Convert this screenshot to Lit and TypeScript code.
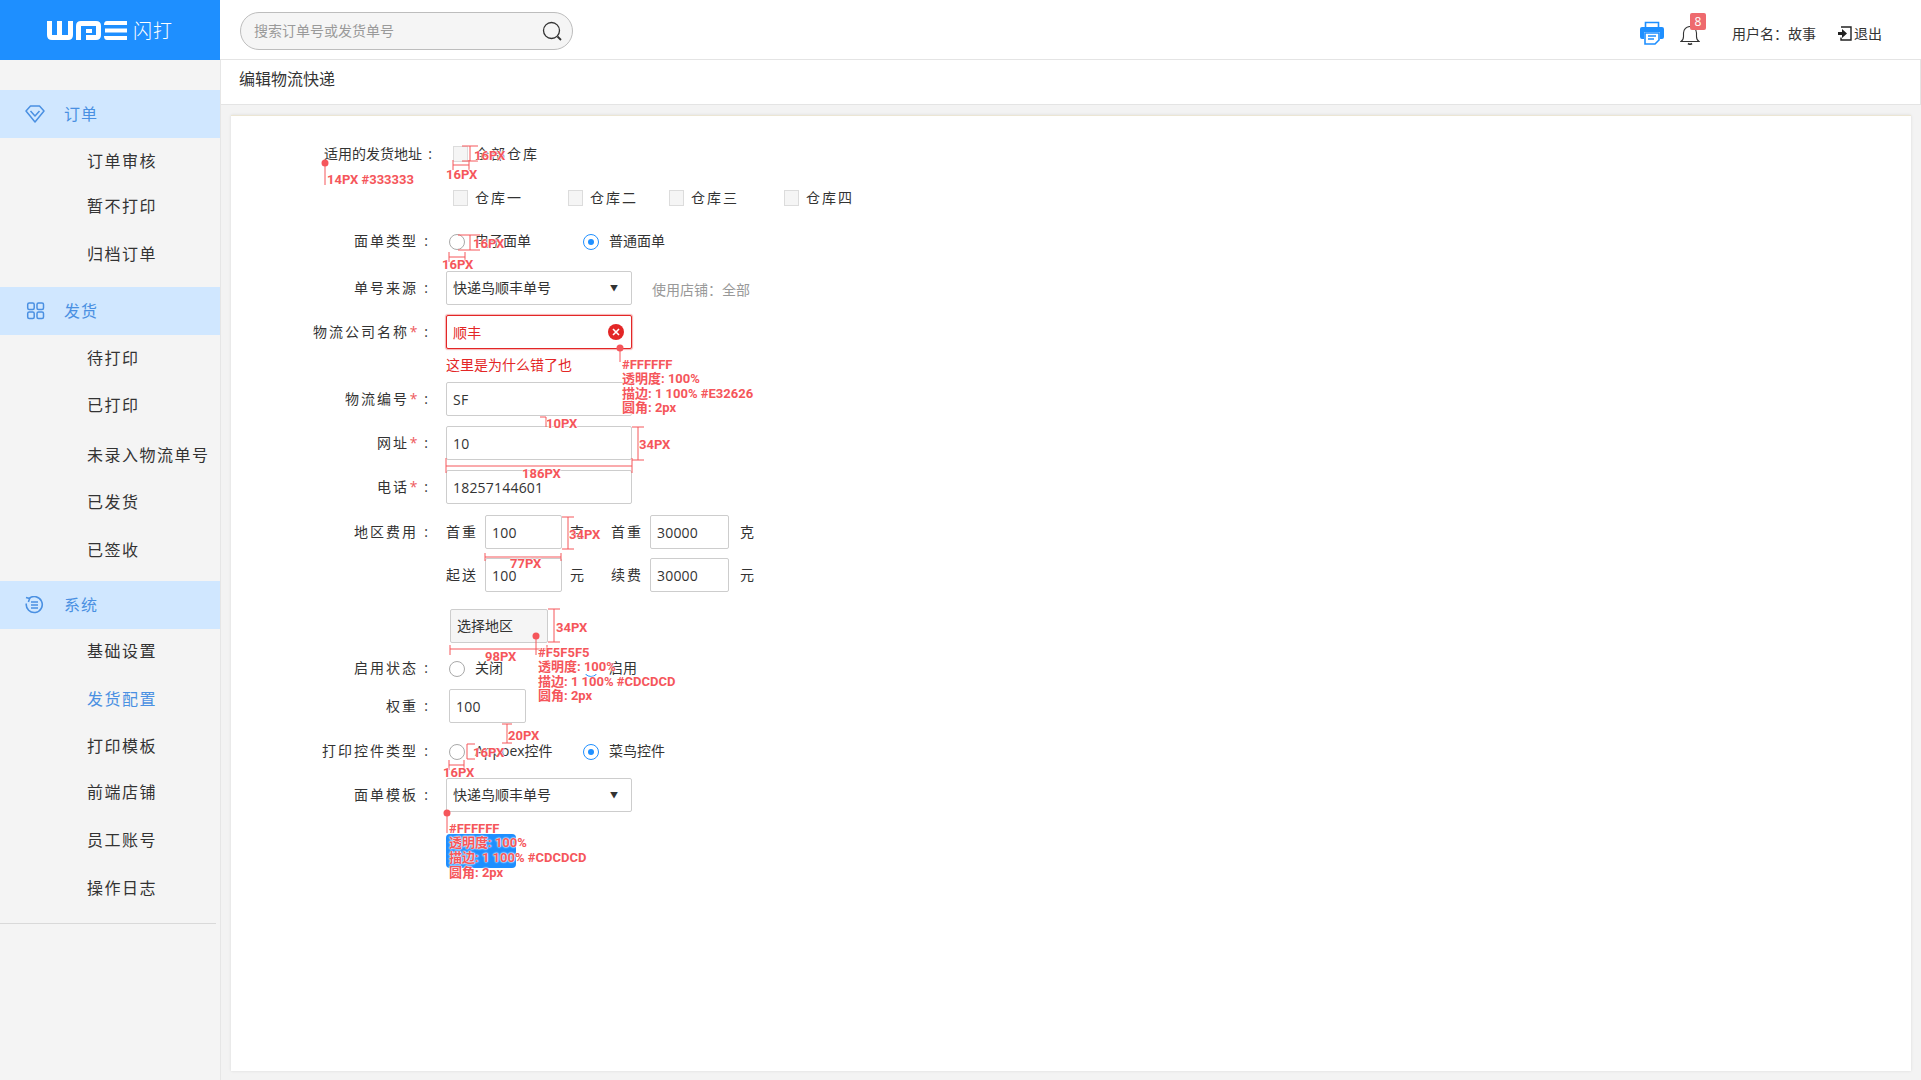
import { LitElement, html, css, svg } from 'lit';
import { customElement } from 'lit/decorators.js';

type NavItem = { text: string; h: number; active?: boolean };
type NavGroup = { title: string; icon: string; gap: number; items: NavItem[] };

const groups: NavGroup[] = [
  {
    title: '订单',
    icon: 'gem',
    gap: 0,
    items: [
      { text: '订单审核', h: 46 },
      { text: '暂不打印', h: 44 },
      { text: '归档订单', h: 52 },
    ],
  },
  {
    title: '发货',
    icon: 'grid',
    gap: 7,
    items: [
      { text: '待打印', h: 46 },
      { text: '已打印', h: 48 },
      { text: '未录入物流单号', h: 52 },
      { text: '已发货', h: 42 },
      { text: '已签收', h: 54 },
    ],
  },
  {
    title: '系统',
    icon: 'sys',
    gap: 4,
    items: [
      { text: '基础设置', h: 44 },
      { text: '发货配置', h: 52, active: true },
      { text: '打印模板', h: 42 },
      { text: '前端店铺', h: 49 },
      { text: '员工账号', h: 47 },
      { text: '操作日志', h: 50 },
    ],
  },
];

// red redline annotations drawn over the design: [left, centre y, text, covers what is under it]
const notes: [number, number, string, boolean?][] = [
  [327, 180, '14PX #333333'],
  [474, 156, '16PX'],
  [446, 175, '16PX'],
  [473, 244, '16PX'],
  [442, 265, '16PX'],
  [622, 365, '#FFFFFF'],
  [622, 379, '透明度: 100%'],
  [622, 394, '描边: 1 100% #E32626'],
  [622, 408, '圆角: 2px'],
  [546, 424, '10PX'],
  [639, 445, '34PX'],
  [522, 474, '186PX'],
  [569, 535, '34PX'],
  [510, 564, '77PX'],
  [556, 628, '34PX'],
  [485, 657, '98PX'],
  [538, 653, '#F5F5F5'],
  [538, 667, '透明度: 100%', true],
  [538, 682, '描边: 1 100% #CDCDCD'],
  [538, 696, '圆角: 2px'],
  [508, 736, '20PX'],
  [473, 753, '16PX'],
  [443, 773, '16PX'],
  [449, 829, '#FFFFFF'],
  [449, 843, '透明度: 100%'],
  [449, 858, '描边: 1 100% #CDCDCD'],
  [449, 873, '圆角: 2px'],
];

const dots: [number, number][] = [
  [325, 163],
  [620, 348],
  [536, 636],
  [447, 813],
];

const lines = [
  'M325 163V185',
  'M462 146H478M470 146V161M462 161H478',
  'M453 160V170M453 165H469M469 160V170',
  'M458 235H480M470 235V250M458 250H480',
  'M449 252V262M449 257H465M465 252V262',
  'M620 348V362',
  'M540 417H546M546 417V427',
  'M632 427H644M638 427V460M632 460H644',
  'M446 458V473M446 466H632M632 458V473',
  'M562 517H574M568 517V549M562 549H574',
  'M485 553V561M485 557H561M561 553V561',
  'M548 609H560M554 609V642M548 642H560',
  'M536 636V655',
  'M450 645V655M450 649H547M547 645V655',
  'M502 724H512M507 724V743M502 743H512',
  'M467 744H475M467 744V759M467 759H475',
  'M449 760V770M449 765H464M464 760V770',
  'M447 813V833',
].join('');

@customElement('app-root')
export class AppRoot extends LitElement {
  static styles = css`
    :host {
      display: grid;
      position: relative;
      grid-template-columns: 220px 1fr;
      grid-template-rows: 60px 1fr;
      width: 1921px;
      height: 1080px;
      overflow: hidden;
      background: #f3f3f3;
      color: #333;
      font: 14px/20px 'Open Sans', 'Noto Sans CJK SC', sans-serif;
    }

    .brand {
      display: flex;
      align-items: center;
      gap: 5px;
      padding: 2px 0 0 46px;
      background: #1e8fff;
      color: #fff;
      font-size: 19px;
      font-weight: 300;
      letter-spacing: 1px;
    }

    .top {
      display: flex;
      align-items: center;
      padding: 2px 39px 0 20px;
      background: #fff;
      border-bottom: 1px solid #e4e4e4;
    }

    .search {
      display: flex;
      align-items: center;
      justify-content: space-between;
      box-sizing: border-box;
      width: 333px;
      height: 38px;
      padding: 0 10px 0 13px;
      border: 1px solid #bdbdbd;
      border-radius: 19px;
      background: #f5f5f5;
      color: #9a9a9a;
    }

    .tools {
      display: flex;
      align-items: center;
      margin-left: auto;
      padding-top: 6px;
    }

    .print {
      margin-top: -1px;
    }

    .bell {
      position: relative;
      display: flex;
      margin: 4px 32px 0 16px;
    }

    .badge {
      position: absolute;
      left: 10px;
      top: -13px;
      width: 16px;
      height: 17px;
      border-radius: 2px;
      background: #ee6a6e;
      color: #fff;
      font-size: 12px;
      line-height: 17px;
      text-align: center;
    }

    .logout {
      display: flex;
      align-items: center;
      gap: 2px;
      margin-left: 22px;
    }

    .side {
      padding-top: 30px;
      background: #f4f4f4;
    }

    .group {
      display: flex;
      align-items: center;
      height: 48px;
      background: #d0e7ff;
      color: #4a90e2;
      font-size: 16px;
      letter-spacing: 1px;
    }

    .group svg {
      flex: none;
      margin-left: 25px;
      margin-right: 19px;
    }

    .item {
      display: flex;
      align-items: center;
      padding-left: 87px;
      font-size: 16px;
      letter-spacing: 1.5px;
    }

    .item.active {
      color: #4a90e2;
    }

    .side-end {
      margin: 10px 4px 0 0;
      border-top: 1px solid #d9d9d9;
    }

    .main {
      display: flex;
      flex-direction: column;
      min-width: 0;
      border-left: 1px solid #e6e6e6;
    }

    .crumb {
      box-sizing: border-box;
      height: 45px;
      padding: 9px 0 0 18px;
      background: #fff;
      border-bottom: 1px solid #e4e4e4;
      border-right: 1px solid #e4e4e4;
      font-size: 16px;
    }

    .card {
      flex: 1;
      box-sizing: border-box;
      margin: 10px 10px 9px 10px;
      padding-top: 21px;
      background: #fff;
      border-top: 1px solid #ece6d4;
      box-shadow: 0 0 3px rgba(0, 0, 0, 0.1);
    }

    .row {
      display: flex;
      align-items: center;
      min-height: 34px;
    }

    .m4 { margin-top: 4px; }
    .m6 { margin-top: 6px; }
    .m7 { margin-top: 7px; }
    .m8 { margin-top: 8px; }
    .m9 { margin-top: 9px; }
    .m10 { margin-top: 10px; }
    .m11 { margin-top: 11px; }
    .m13 { margin-top: 13px; }
    .m17 { margin-top: 17px; }
    .m22 { margin-top: 22px; }

    .label {
      display: flex;
      justify-content: flex-end;
      flex: none;
      box-sizing: border-box;
      width: 203px;
      margin-right: 12px;
      letter-spacing: 2px;
    }

    .label.none {
      letter-spacing: 0;
    }

    .label.none .colon {
      margin-right: -4px;
    }

    .star {
      width: 9px;
      color: #ee5a5e;
      letter-spacing: 0;
      text-align: center;
    }

    .colon {
      width: 16px;
      text-align: center;
      letter-spacing: 0;
    }

    .opts {
      display: flex;
      align-items: center;
      padding-left: 3px;
    }

    .box-opts {
      padding-left: 7px;
    }

    .opt {
      display: flex;
      align-items: center;
      gap: 10px;
      width: 134px;
    }

    .box-opt {
      display: flex;
      align-items: center;
      gap: 7px;
      letter-spacing: 2px;
      width: 115px;
    }

    .box-opt.narrow {
      width: 101px;
    }

    .check {
      box-sizing: border-box;
      width: 15px;
      height: 16px;
      border: 1px solid #dcdcdc;
      background: #f5f5f5;
    }

    .radio {
      display: flex;
      align-items: center;
      justify-content: center;
      box-sizing: border-box;
      width: 16px;
      height: 16px;
      margin-top: 2px;
      border: 1px solid #a9a9a9;
      border-radius: 50%;
      background: #fff;
    }

    .radio.on {
      border-color: #1e8fff;
    }

    .radio.on::after {
      content: '';
      width: 6px;
      height: 6px;
      border-radius: 50%;
      background: #1e8fff;
    }

    input {
      box-sizing: border-box;
      width: 186px;
      height: 34px;
      padding: 0 6px;
      border: 1px solid #cdcdcd;
      border-radius: 2px;
      outline: none;
      background: #fff;
      color: #333;
      font: inherit;
      letter-spacing: 0.2px;
    }

    input.short {
      width: 77px;
    }

    input.wide {
      width: 79px;
    }

    .select {
      display: flex;
      align-items: center;
      justify-content: space-between;
      box-sizing: border-box;
      width: 186px;
      height: 34px;
      padding: 0 13px 0 6px;
      border: 1px solid #cdcdcd;
      border-radius: 2px;
    }

    .caret {
      font-size: 8px;
    }

    .hint {
      margin-left: 20px;
      padding-top: 4px;
      color: #999;
    }

    .bad {
      position: relative;
      display: flex;
    }

    .bad input {
      border-color: #e32626;
      color: #e32626;
      box-shadow: 0 0 1px 1px rgba(227, 38, 38, 0.35);
    }

    .clear {
      position: absolute;
      right: 8px;
      top: 9px;
    }

    .error {
      margin-left: 215px;
      color: #e32626;
    }

    .fee {
      display: flex;
      align-items: center;
    }

    .fee-name {
      width: 39px;
      letter-spacing: 2px;
    }

    .fee-unit {
      width: 49px;
      padding-left: 8px;
      box-sizing: border-box;
    }

    .fee-end {
      padding-left: 11px;
    }

    .pick {
      box-sizing: border-box;
      width: 98px;
      height: 34px;
      margin-left: 219px;
      padding: 6px 6px;
      border: 1px solid #cdcdcd;
      border-radius: 2px;
      background: #f5f5f5;
    }

    .indent {
      margin-left: 3px;
    }

    .save {
      width: 70px;
      height: 34px;
      margin-left: 215px;
      border-radius: 4px;
      background: #1e8fff;
    }

    .overlay {
      position: absolute;
      inset: 0;
      pointer-events: none;
    }

    .note {
      position: absolute;
      color: #f5565b;
      font: 700 13px/14px Roboto, 'Noto Sans CJK SC', sans-serif;
      white-space: nowrap;
      text-shadow: 0 0 1px #fff, 0 0 2px #fff, 0 0 2px #fff;
    }

    .note.cover {
      background: linear-gradient(90deg, #fff 70px, transparent 70px);
    }
  `;

  private navIcon(name: string) {
    if (name === 'gem') {
      return html`<svg width="20" height="18" viewBox="0 0 20 18" fill="none" stroke="#4a90e2" stroke-width="1.5" stroke-linejoin="round">
        <path d="M1 6 5.5 1h9L19 6 10 17z" /><path d="M5.5 6 10 11l4.5-5" />
      </svg>`;
    }
    if (name === 'grid') {
      return html`<svg width="20" height="18" viewBox="0 0 20 18" fill="none" stroke="#4a90e2" stroke-width="1.5">
        <rect x="2.7" y="1" width="6.5" height="6.5" rx="1.5" /><rect x="12" y="1" width="6.5" height="6.5" rx="1.5" />
        <rect x="2.7" y="10" width="6.5" height="6.5" rx="1.5" /><rect x="12" y="10" width="6.5" height="6.5" rx="1.5" />
      </svg>`;
    }
    return html`<svg width="20" height="18" viewBox="0 0 20 18" fill="none" stroke="#4a90e2" stroke-width="1.6">
      <path d="M4 2.5A8 8 0 1 1 1.3 7.5" /><path d="M1 1.5 4.6 2.6 3.4 6" /><path d="M6 6h7M6 9h7M6 12h7" />
    </svg>`;
  }

  private label(text: string, star = false, cls = '') {
    return html`<div class="label ${cls}">
      <span>${text}</span>${star ? html`<span class="star">*</span>` : ''}<span class="colon">:</span>
    </div>`;
  }

  private radio(text: string, on = false) {
    return html`<div class="opt"><span class="radio ${on ? 'on' : ''}"></span><span>${text}</span></div>`;
  }

  private boxOpt(text: string, narrow = false) {
    return html`<div class="box-opt ${narrow ? 'narrow' : ''}"><span class="check"></span><span>${text}</span></div>`;
  }

  private select() {
    return html`<div class="select"><span>快递鸟顺丰单号</span><span class="caret">▼</span></div>`;
  }

  render() {
    return html`
      <div class="brand">
        <svg width="82" height="20" viewBox="0 0 80 20" fill="#fff">
          <path d="M0 0h5v14h5V0h5v14h6V0h5v14q0 5-5 5H5q-5 0-5-5z" />
          <path d="M29 5q0-5 5-5h15q5 0 5 5v9q0 5-5 5H39v-5h10V5H34v14h-5z" />
          <path d="M39 8h6v4h-6z" />
          <path d="M60 0h20v4H57q0-4 3-4zM58 7.5h22v4H58zM57 15h23v4H60q-3 0-3-4z" />
        </svg>
        <span>闪打</span>
      </div>

      <div class="top">
        <div class="search">
          <span>搜索订单号或发货单号</span>
          <svg width="20" height="20" viewBox="0 0 20 20" fill="none" stroke="#333" stroke-width="1.3">
            <circle cx="9.5" cy="9.5" r="8" /><path d="M15.5 15.5 19 19" stroke-width="1.8" />
          </svg>
        </div>
        <div class="tools">
          <svg class="print" width="24" height="24" viewBox="0 0 24 24">
            <path d="M5.5 6V1.5h13V6" fill="none" stroke="#1e8fff" stroke-width="1.6" />
            <path d="M2 6h20q2 0 2 2v8q0 2-2 2h-2V11H4v7H2q-2 0-2-2V8q0-2 2-2z" fill="#1e8fff" />
            <path d="M5 12h14v7l-4 4H5z" fill="#fff" stroke="#1e8fff" stroke-width="1.6" />
            <path d="M8 15h8M8 18h6" stroke="#1e8fff" stroke-width="1.5" />
          </svg>
          <div class="bell">
            <svg width="20" height="19" viewBox="0 0 20 19" fill="none" stroke="#333" stroke-width="1.1">
              <path d="M1 15.5q2.500-1.500 2.500-5V7a6.500 6.500 0 0 1 13 0v3.500q0 3.500 2.500 5z" /><path d="M8 17.500q2 1.500 4 0" stroke-width="1.600" />
            </svg>
            <span class="badge">8</span>
          </div>
          <span>用户名：故事</span>
          <div class="logout">
            <svg width="14" height="15" viewBox="0 0 14 15">
              <path d="M3 1h10v13H3v-2.500" fill="none" stroke="#222" stroke-width="1.400" />
              <path d="M3 1h10M0 6h4V3l5 4.500L4 12V9H0z" fill="#222" />
            </svg>
            <span>退出</span>
          </div>
        </div>
      </div>

      <nav class="side">
        ${groups.map(
          (g) => html`
            <div class="group" style="margin-top:${g.gap}px">${this.navIcon(g.icon)}<span>${g.title}</span></div>
            ${g.items.map(
              (i) => html`<div class="item ${i.active ? 'active' : ''}" style="height:${i.h}px">${i.text}</div>`,
            )}
          `,
        )}
        <div class="side-end"></div>
      </nav>

      <main class="main">
        <div class="crumb">编辑物流快递</div>
        <div class="card">
          <div class="row">
            ${this.label('适用的发货地址', false, 'none')}
            <div class="opts box-opts">${this.boxOpt('全部仓库')}</div>
          </div>
          <div class="row m10">
            <div class="label"></div>
            <div class="opts box-opts">
              ${this.boxOpt('仓库一')}${this.boxOpt('仓库二', true)}${this.boxOpt('仓库三')}${this.boxOpt('仓库四')}
            </div>
          </div>
          <div class="row m9">
            ${this.label('面单类型')}
            <div class="opts">${this.radio('电子面单')}${this.radio('普通面单', true)}</div>
          </div>
          <div class="row m13">
            ${this.label('单号来源')}${this.select()}
            <span class="hint">使用店铺：全部</span>
          </div>
          <div class="row m10">
            ${this.label('物流公司名称', true)}
            <div class="bad">
              <input value="顺丰" readonly />
              <svg class="clear" width="16" height="16" viewBox="0 0 16 16">
                <circle cx="8" cy="8" r="8" fill="#e32626" /><path d="M5 5l6 6M11 5l-6 6" stroke="#fff" stroke-width="1.600" />
              </svg>
            </div>
          </div>
          <div class="error m6">这里是为什么错了也</div>
          <div class="row m7">${this.label('物流编号', true)}<input value="SF" readonly /></div>
          <div class="row m10">${this.label('网址', true)}<input value="10" readonly /></div>
          <div class="row m10">${this.label('电话', true)}<input value="18257144601" readonly /></div>
          <div class="row m11">
            ${this.label('地区费用')}
            <div class="fee">
              <span class="fee-name">首重</span><input class="short" value="100" readonly /><span class="fee-unit">克</span>
              <span class="fee-name">首重</span><input class="wide" value="30000" readonly /><span class="fee-end">克</span>
            </div>
          </div>
          <div class="row m9">
            <div class="label"></div>
            <div class="fee">
              <span class="fee-name">起送</span><input class="short" value="100" readonly /><span class="fee-unit">元</span>
              <span class="fee-name">续费</span><input class="wide" value="30000" readonly /><span class="fee-end">元</span>
            </div>
          </div>
          <div class="pick m17">选择地区</div>
          <div class="row m8">
            ${this.label('启用状态')}
            <div class="opts">${this.radio('关闭')}${this.radio('启用', true)}</div>
          </div>
          <div class="row m4">
            ${this.label('权重')}<input class="short indent" value="100" readonly />
          </div>
          <div class="row m11">
            ${this.label('打印控件类型')}
            <div class="opts">${this.radio('Appoex控件')}${this.radio('菜鸟控件', true)}</div>
          </div>
          <div class="row m10">${this.label('面单模板')}${this.select()}</div>
          <div class="save m22"></div>
        </div>
      </main>

      <div class="overlay">
        <svg width="1921" height="1080" viewBox="0 0 1921 1080">
          <path d=${lines} fill="none" stroke="#f5565b" stroke-width="1" />
          ${dots.map(([x, y]) => svg`<circle cx=${x} cy=${y} r="3.500" fill="#f5565b" />`)}
        </svg>
        ${notes.map(
          ([x, y, t, cover]) =>
            html`<span class="note ${cover ? 'cover' : ''}" style="left:${x}px;top:${y - 7}px">${t}</span>`,
        )}
      </div>
    `;
  }
}
